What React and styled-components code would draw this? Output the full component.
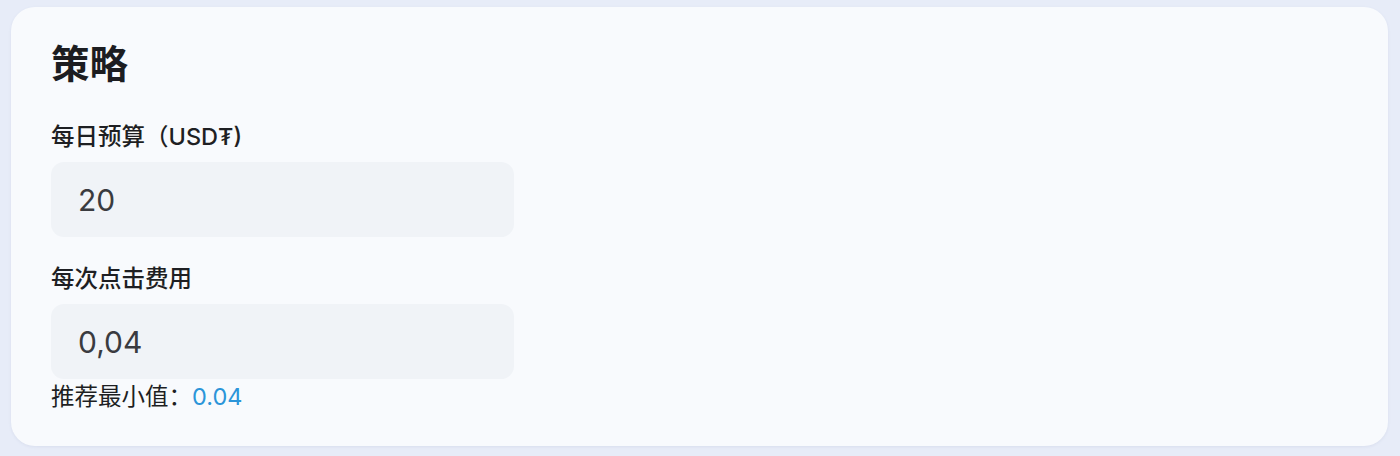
import React from "react";
import styled, { createGlobalStyle } from "styled-components";

const GlobalStyle = createGlobalStyle`
  html, body {
    margin: 0;
    padding: 0;
    background: #e7ecf8;
  }
  body {
    font-family: Inter, "Noto Sans CJK SC", sans-serif;
    -webkit-font-smoothing: antialiased;
  }
`;

const Page = styled.div`
  width: 1400px;
  height: 456px;
  box-sizing: border-box;
  padding: 7px 12px 10px 11px;
  background: #e7ecf8;
`;

const Card = styled.section`
  box-sizing: border-box;
  height: 439px;
  background: #f8fafd;
  border-radius: 24px;
  padding: 35px 40px 0 40px;
  box-shadow: 0 1px 3px rgba(120, 135, 170, 0.12);
`;

const Title = styled.h2`
  margin: 0 0 36px;
  font-size: 38.5px;
  line-height: 44px;
  font-weight: 700;
  color: #1c1d21;
`;

const Field = styled.div`
  display: flex;
  flex-direction: column;
  width: 463px;
  margin-bottom: ${(p) => p.$gap}px;
`;

const Label = styled.label`
  font-size: 23.5px;
  line-height: 30px;
  font-weight: 500;
  color: #1e1f23;
  margin-bottom: 10px;
`;

const Input = styled.input`
  box-sizing: border-box;
  height: 75px;
  width: 100%;
  border: none;
  outline: none;
  border-radius: 13px;
  background: #f0f3f7;
  padding: 0 27px;
  font-family: Inter, "Noto Sans CJK SC", sans-serif;
  font-size: 30px;
  color: #3a3b3f;
`;

const Hint = styled.div`
  margin-top: 3px;
  font-size: 23.5px;
  line-height: 30px;
  color: #1e1f23;
`;

const HintValue = styled.span`
  color: #2b95d9;
`;

export default function App() {
  return (
    <>
      <GlobalStyle />
      <Page>
        <Card>
          <Title>策略</Title>
          <Field $gap={27}>
            <Label>每日预算（USD₮)</Label>
            <Input defaultValue="20" />
          </Field>
          <Field $gap={0}>
            <Label>每次点击费用</Label>
            <Input defaultValue="0,04" />
            <Hint>
              推荐最小值：<HintValue>0.04</HintValue>
            </Hint>
          </Field>
        </Card>
      </Page>
    </>
  );
}
